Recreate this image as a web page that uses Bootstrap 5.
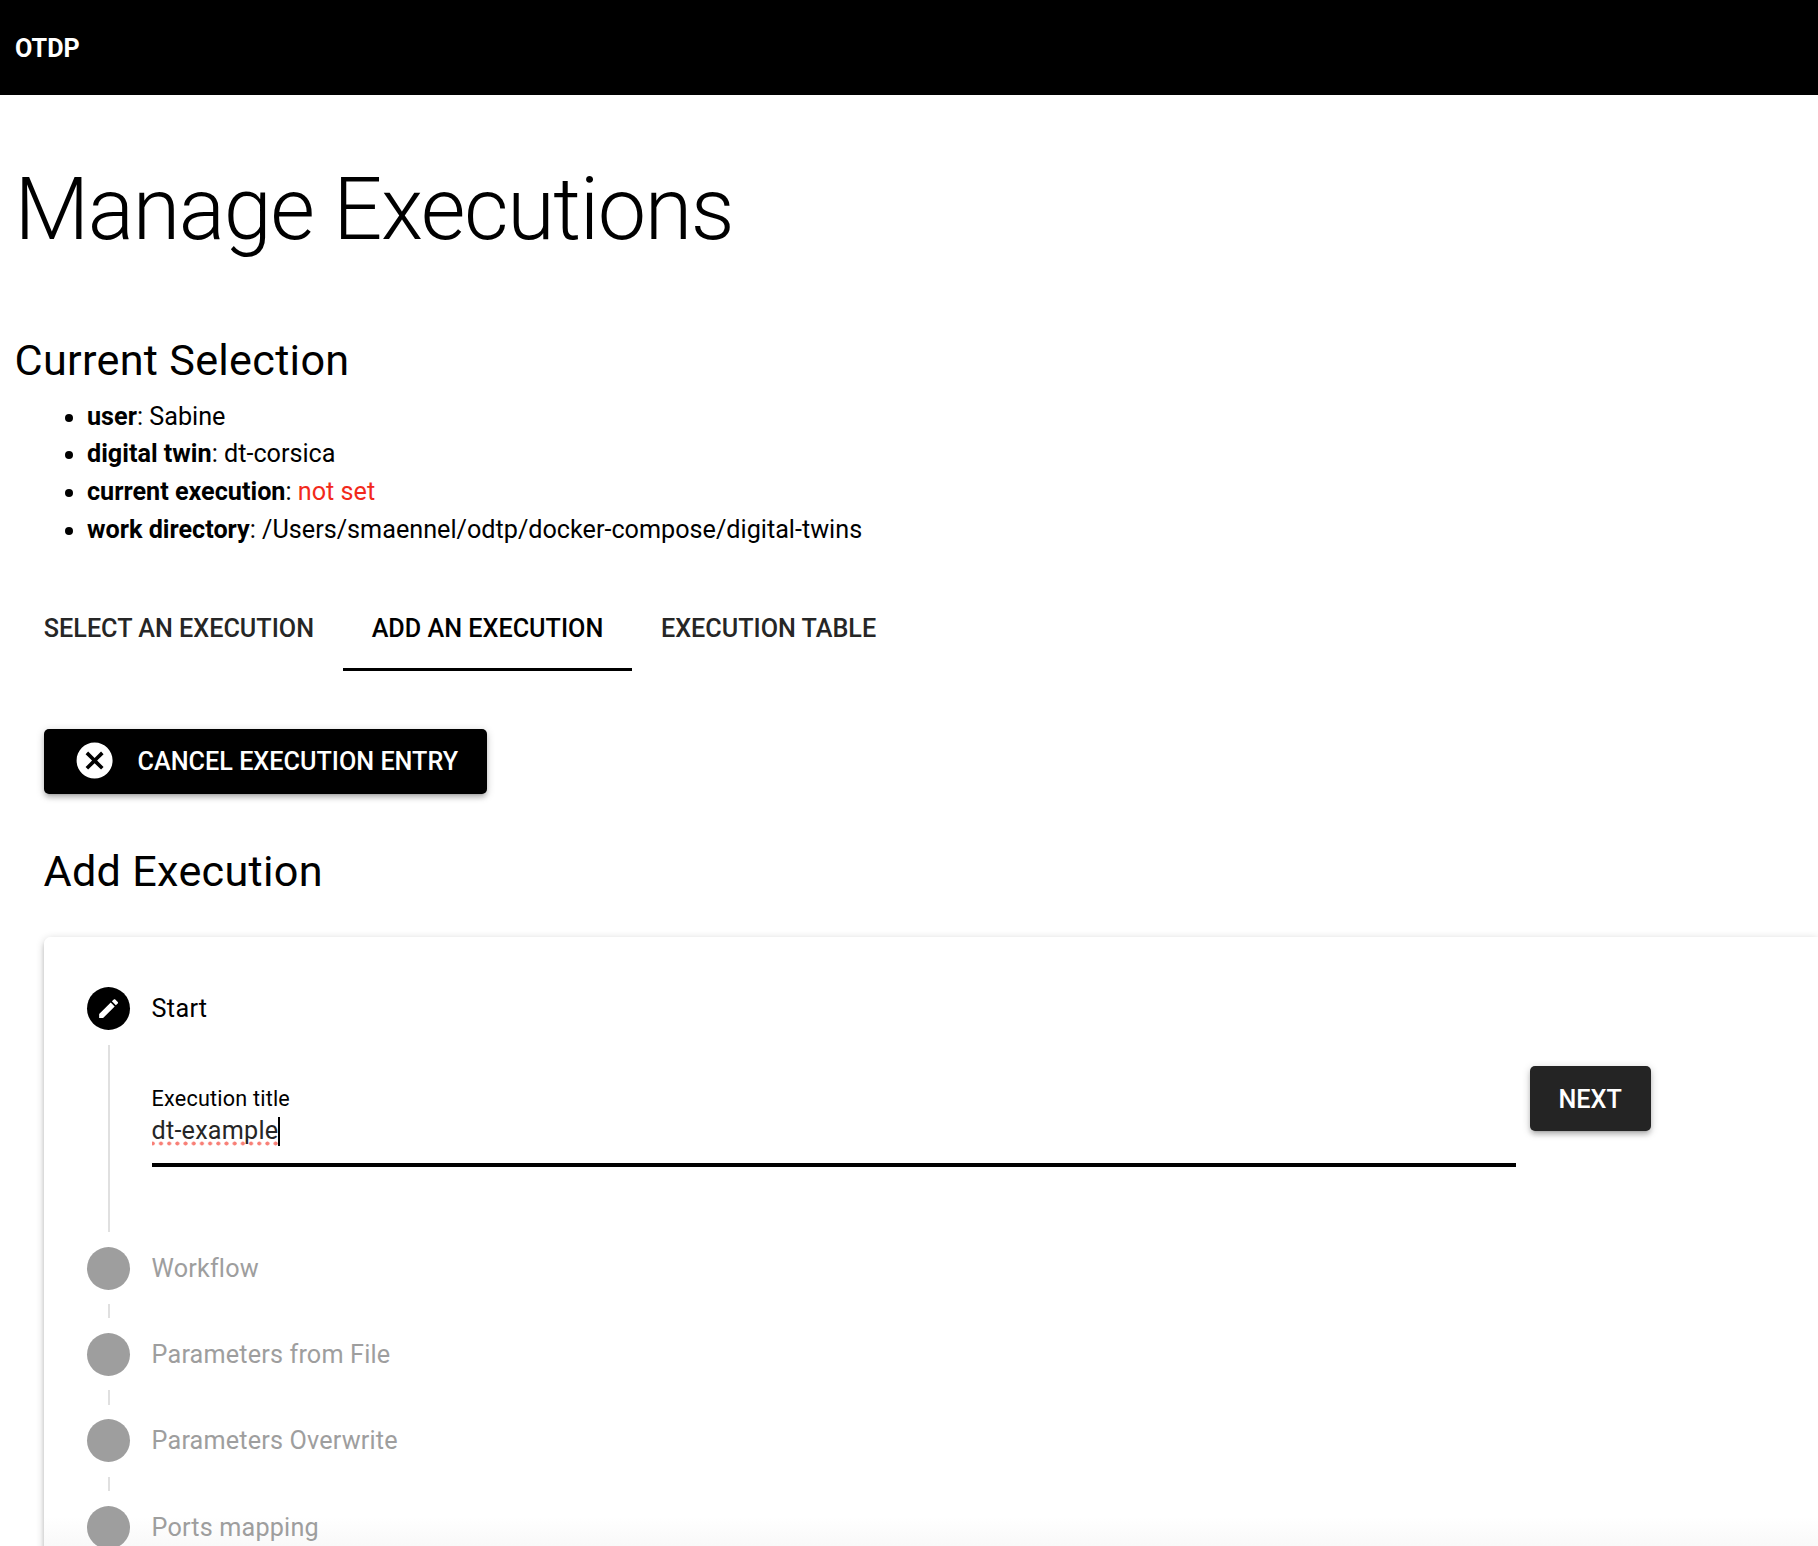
<!DOCTYPE html>
<html lang="en">
<head>
<meta charset="utf-8">
<title>OTDP - Manage Executions</title>
<meta name="viewport" content="width=device-width, initial-scale=1">
<link href="https://cdn.jsdelivr.net/npm/bootstrap@5.3.0/dist/css/bootstrap.min.css" rel="stylesheet">
<style>
  html { overflow: hidden; }
  body { font-family: Roboto, "Liberation Sans", sans-serif; font-size: 25.2px; line-height: 37.8px; color: #000; height: 1546px; overflow: hidden; }
  .topbar { height: 95px; padding: 2px 15px 0; }
  .topbar .navbar-brand { font-size: 25.2px; line-height: 37.8px; }
  .page { padding: 72px 0 0 15px; }
  .page-title { font-size: 86.4px; line-height: 86.4px; font-weight: 300; letter-spacing: -1.4px; margin: 0 0 79px -.5px; }
  .section-title { font-size: 43.2px; line-height: 57.6px; font-weight: 400; letter-spacing: .29px; margin: 0 0 0 -.5px; }
  .selection { margin: 7.6px 0 35.4px; padding-left: 72px; }
  .unset { color: #f2291b; }
  .exec-tabs .nav-link { height: 86.4px; padding: 6px 28.8px 0; border-bottom: 3px solid transparent; font-weight: 500; color: #262626; display: flex; align-items: center; }
  .exec-tabs .nav-link.active { color: #000; border-bottom-color: #000; }
  .panel { padding: 58px 0 0 29px; }
  .action { --bs-btn-border-radius: 5px; height: 65px; border: 0; padding: 2px 28.8px 0; font-size: 25.2px; line-height: 37.8px; font-weight: 500; box-shadow: 0 2px 9px rgba(0,0,0,.2), 0 4px 4px rgba(0,0,0,.14), 0 5px 2px -4px rgba(0,0,0,.12); }
  .action-cancel { --bs-btn-bg: #000; }
  .action-next { --bs-btn-bg: #242424; }
  .action svg { width: 43.2px; height: 43.2px; margin: 0 21.6px 2px 0; }
  .add-title { margin-top: 49.4px; margin-bottom: 36.6px; }
  .stepper { border: 0; border-radius: 7px 0 0 0; padding: 50px 0 0 43px; height: 620px; overflow: hidden; background: linear-gradient(to bottom, #fff 580px, #f9f9f9 608px); box-shadow: 0 2px 9px rgba(0,0,0,.2), 0 4px 4px rgba(0,0,0,.14), 0 5px 2px -4px rgba(0,0,0,.12); }
  .step-row { gap: 21.6px; }
  .step-rail { width: 43px; gap: 14.5px; margin-bottom: 14.5px; }
  .step-dot { width: 43px; height: 43px; background: #9e9e9e; }
  .step-dot svg { width: 25.2px; height: 25.2px; }
  .step-line { width: 2px; background: #e0e0e0; min-height: 14.4px; margin-left: 1px; }
  .step-name { line-height: 43px; letter-spacing: .17px; color: #9e9e9e; }
  .step-now .step-name { line-height: 43px; color: #000; letter-spacing: .3px; }
  .step-now .step-dot { background: #000; }
  .step-now .step-rail { height: 244.9px; }
  .step-form { margin-top: 36px; gap: 14px; }
  .title-field { width: 1364px; height: 101px; padding-top: 19px; border-bottom: 4px solid #000; }
  .title-field .form-label { font-size: 21.6px; line-height: 28px; letter-spacing: .2px; margin: 0; }
  .title-value { color: #262626; line-height: 36px; letter-spacing: .2px; }
  .typed { background: radial-gradient(circle at center, #f87f76 1.7px, transparent 2.3px) -3.3px 27.5px / 8.2px 5px repeat-x; }
  .caret { width: 2px; height: 29px; background: #000; }
</style>
<script src="https://cdn.jsdelivr.net/npm/bootstrap@5.3.0/dist/js/bootstrap.bundle.min.js"></script>
</head>
<body class="bg-white">
<header class="navbar topbar bg-black"><span class="navbar-brand text-white fw-bold m-0 p-0">OTDP</span></header>
<main class="page">
  <h1 class="page-title">Manage Executions</h1>
  <h2 class="section-title">Current Selection</h2>
  <ul class="selection">
    <li><strong>user</strong>: Sabine</li>
    <li><strong>digital twin</strong>: dt-corsica</li>
    <li><strong>current execution</strong>: <span class="unset">not set</span></li>
    <li><strong>work directory</strong>: /Users/smaennel/odtp/docker-compose/digital-twins</li>
  </ul>
  <nav class="nav exec-tabs text-uppercase">
    <a class="nav-link" href="#">Select an execution</a>
    <a class="nav-link active" href="#">Add an execution</a>
    <a class="nav-link" href="#">Execution table</a>
  </nav>
  <section class="panel">
    <button class="btn btn-dark action action-cancel d-flex align-items-center text-uppercase" type="button">
      <svg viewBox="0 0 24 24" fill="#fff" aria-hidden="true"><path d="M12 2C6.47 2 2 6.47 2 12s4.47 10 10 10 10-4.47 10-10S17.53 2 12 2zm5 13.59L15.59 17 12 13.41 8.41 17 7 15.59 10.59 12 7 8.41 8.41 7 12 10.59 15.59 7 17 8.41 13.41 12 17 15.59z"/></svg>
      Cancel execution entry
    </button>
    <h2 class="section-title add-title">Add Execution</h2>
    <div class="card stepper">
      <div class="d-flex step-row step-now">
        <div class="step-rail d-flex flex-column align-items-center flex-shrink-0">
          <div class="step-dot rounded-circle d-flex align-items-center justify-content-center flex-shrink-0">
            <svg viewBox="0 0 24 24" fill="#fff" aria-hidden="true"><path d="M3 17.25V21h3.75L17.81 9.94l-3.75-3.75L3 17.25zM20.71 7.04c.39-.39.39-1.02 0-1.41l-2.34-2.34c-.39-.39-1.02-.39-1.41 0l-1.83 1.83 3.75 3.75 1.83-1.83z"/></svg>
          </div>
          <div class="step-line flex-grow-1"></div>
        </div>
        <div>
          <div class="step-name">Start</div>
          <div class="step-form d-flex align-items-start">
            <div class="title-field">
              <div class="form-label">Execution title</div>
              <div class="title-value d-flex align-items-center"><span class="typed">dt-example</span><span class="caret"></span></div>
            </div>
            <button class="btn btn-dark action action-next text-uppercase" type="button">Next</button>
          </div>
        </div>
      </div>
      <div class="d-flex step-row">
        <div class="step-rail d-flex flex-column align-items-center"><div class="step-dot rounded-circle"></div><div class="step-line"></div></div>
        <div class="step-name">Workflow</div>
      </div>
      <div class="d-flex step-row">
        <div class="step-rail d-flex flex-column align-items-center"><div class="step-dot rounded-circle"></div><div class="step-line"></div></div>
        <div class="step-name">Parameters from File</div>
      </div>
      <div class="d-flex step-row">
        <div class="step-rail d-flex flex-column align-items-center"><div class="step-dot rounded-circle"></div><div class="step-line"></div></div>
        <div class="step-name">Parameters Overwrite</div>
      </div>
      <div class="d-flex step-row">
        <div class="step-rail d-flex flex-column align-items-center"><div class="step-dot rounded-circle"></div></div>
        <div class="step-name">Ports mapping</div>
      </div>
    </div>
  </section>
</main>
</body>
</html>
